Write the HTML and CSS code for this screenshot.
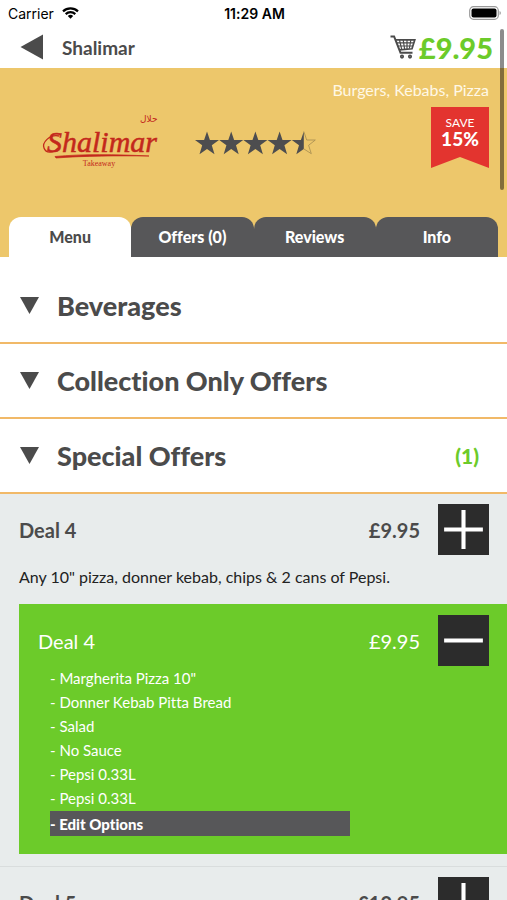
FILE: index.html
```html
<!DOCTYPE html>
<html lang="en">
<head>
<meta charset="utf-8">
<meta name="viewport" content="width=device-width, initial-scale=1">
<title>Shalimar</title>
<link rel="stylesheet" href="styles.css">
</head>
<body>
<div class="screen">
  <div class="status">
    <div class="status-left">
      <span>Carrier</span>
      <svg class="wifi" viewBox="0 0 17 12" aria-hidden="true">
        <path d="M1 4.4a11 11 0 0 1 15 0M3.7 7.1a7 7 0 0 1 9.6 0" fill="none" stroke="#000" stroke-width="2.2"/>
        <path d="M5.8 9a4 4 0 0 1 5.4 0L8.5 11.8z" fill="#000"/>
      </svg>
    </div>
    <span class="clock">11:29 AM</span>
    <div class="status-right">
      <svg class="battery" viewBox="0 0 32 14" aria-hidden="true">
        <rect x="0.7" y="0.7" width="28.6" height="12.6" rx="3.8" fill="#fff" stroke="#999" stroke-width="1.2"/>
        <rect x="2.5" y="2.5" width="25" height="9" rx="2" fill="#000"/>
        <path d="M30.6 5v4a2.3 2.3 0 0 0 0-4z" fill="#888"/>
      </svg>
    </div>
  </div>

  <header class="topbar">
    <button class="back" type="button" aria-label="Back">
      <svg viewBox="0 0 24 26" aria-hidden="true"><path d="M0.5 13 23 0.5v25z" fill="#4b4b4b"/></svg>
    </button>
    <h1>Shalimar</h1>
    <a class="basket" href="#basket">
      <svg viewBox="0 0 26 24" aria-hidden="true" fill="none" stroke="#4b4b4b">
        <path d="M0.500 1.500h3.600L10.500 17.800h12" stroke-width="2"/>
        <path d="M5.400 4.800h19.400l-2.800 9-12.600 1" stroke-width="1.700"/>
        <path d="M6.600 7.800h17.200M7.800 11h15M9.500 5l2.200 9.300M13.200 5l1.400 9M17 5v9M20.800 5l-1.400 8.500" stroke-width="1.200"/>
        <circle cx="12" cy="21.600" r="1.200" stroke-width="1.700"/>
        <circle cx="20" cy="21.600" r="1.200" stroke-width="1.700"/>
      </svg>
      <span>£9.95</span>
    </a>
  </header>

  <section class="hero">
    <div class="hero-body">
      <svg class="logo" viewBox="0 0 120 60" role="img" aria-label="Shalimar Takeaway">
        <text class="logo-name" x="7" y="42">Shalimar</text>
        <path d="M19 26c-10-2-17 7-15 12 2 6 10 5 14 0" fill="none" stroke="#c3281c" stroke-width="1.300"/>
        <path d="M15 46.500c28-2.600 60-2.200 94-0.500-32-0.300-64-0.200-93 2z" fill="#c3281c" stroke="#c3281c" stroke-width="0.700"/>
        <text class="logo-halal" x="100" y="12">حلال</text>
        <text class="logo-sub" x="59" y="56">Takeaway</text>
      </svg>
      <svg class="stars" viewBox="0 0 122 26" role="img" aria-label="4.5 out of 5 stars">
        <defs>
          <path id="star" d="M12 1.500 14.900 10H24l-7.200 5.300 2.700 8.900L12 18.900 4.500 24.200l2.700-8.900L0 10h9.100z"/>
        </defs>
        <g fill="#4d4d4f">
          <use href="#star"/><use href="#star" x="24.200"/><use href="#star" x="48.400"/><use href="#star" x="72.600"/>
          <path d="M108.800 1.500V18.900l-7.500 5.300 2.700-8.900-7.200-5.300h9.100z"/>
        </g>
        <path d="M108.800 1.500 111.700 10h8.600l-6.700 5.300 2.700 8.400-7.500-4.800" fill="none" stroke="#a38b50" stroke-width="0.800"/>
      </svg>
      <div class="hero-side">
        <p class="cuisine">Burgers, Kebabs, Pizza</p>
        <div class="ribbon"><span>SAVE</span><strong>15%</strong></div>
      </div>
    </div>
    <nav class="tabs">
      <a class="tab active" href="#menu">Menu</a>
      <a class="tab" href="#offers">Offers (0)</a>
      <a class="tab" href="#reviews">Reviews</a>
      <a class="tab" href="#info">Info</a>
    </nav>
  </section>

  <main class="menu">
    <button class="category" type="button"><i class="caret"></i><span>Beverages</span></button>
    <button class="category" type="button"><i class="caret"></i><span>Collection Only Offers</span></button>
    <button class="category" type="button"><i class="caret"></i><span>Special Offers</span><b>(1)</b></button>

    <div class="deals">
      <article class="deal">
        <div class="line">
          <h2>Deal 4</h2><span class="price">£9.95</span>
          <button class="step" type="button" aria-label="Add Deal 4"><svg viewBox="0 0 50 50"><path d="M6 25h38M25 6v38"/></svg></button>
        </div>
        <p class="about">Any 10" pizza, donner kebab, chips &amp; 2 cans of Pepsi.</p>
        <div class="chosen">
          <div class="line">
            <h3>Deal 4</h3><span class="price">£9.95</span>
            <button class="step" type="button" aria-label="Remove Deal 4"><svg viewBox="0 0 50 50"><path d="M6 25h38"/></svg></button>
          </div>
          <ul>
            <li>- Margherita Pizza 10"</li>
            <li>- Donner Kebab Pitta Bread</li>
            <li>- Salad</li>
            <li>- No Sauce</li>
            <li>- Pepsi 0.33L</li>
            <li>- Pepsi 0.33L</li>
          </ul>
          <button class="edit" type="button">- Edit Options</button>
        </div>
      </article>
      <article class="deal">
        <div class="line">
          <h2>Deal 5</h2><span class="price">£10.95</span>
          <button class="step" type="button" aria-label="Add Deal 5"><svg viewBox="0 0 50 50"><path d="M6 25h38M25 6v38"/></svg></button>
        </div>
      </article>
    </div>
  </main>
  <div class="scroll-thumb"></div>
</div>
</body>
</html>
```
FILE: styles.css
```css
* {
  box-sizing: border-box;
}

body,
h1,
h2,
h3,
p,
ul {
  margin: 0;
  padding: 0;
}

body {
  font-family: Lato, "Liberation Sans", sans-serif;
  font-variant-ligatures: none;
  color: #4b4b4b;
  background: #fff;
}

button {
  margin: 0;
  padding: 0;
  border: 0;
  font: inherit;
  font-variant-ligatures: none;
  color: inherit;
  background: none;
  text-align: left;
}

a {
  color: inherit;
  text-decoration: none;
}

svg {
  display: block;
}

.screen {
  position: relative;
  height: 100vh;
  overflow: hidden;
}

/* Status bar */
.status {
  display: grid;
  grid-template-columns: 1fr auto 1fr;
  align-items: center;
  height: 26px;
  padding: 0 6px 0 8px;
  font-family: Inter, "Liberation Sans", sans-serif;
  font-size: 14px;
  color: #000;
}

.status-left {
  display: flex;
  align-items: center;
  gap: 8px;
}

.wifi {
  width: 17px;
  height: 12px;
}

.clock {
  font-weight: 600;
}

.battery {
  width: 32px;
  height: 14px;
  margin-left: auto;
}

/* Title bar */
.topbar {
  display: flex;
  align-items: center;
  height: 42px;
  padding: 0 14px 0 20px;
}

.back svg {
  width: 24px;
  height: 26px;
}

.topbar h1 {
  flex: 1;
  margin-left: 18px;
  font-size: 19px;
  font-weight: 700;
}

.basket {
  display: flex;
  align-items: center;
  gap: 3px;
  font-size: 29px;
  font-weight: 900;
  color: #6ccb2a;
}

.basket svg {
  width: 26px;
  height: 24px;
}

/* Restaurant banner */
.hero {
  background: #edc76b;
}

.hero-body {
  display: flex;
  height: 149px;
  padding: 0 18px 0 40px;
}

.logo {
  width: 120px;
  height: 60px;
  margin-top: 42px;
  overflow: visible;
}

.logo text {
  fill: #c3281c;
}

.logo-name {
  font-family: "Liberation Serif", serif;
  font-style: italic;
  font-size: 30px;
  stroke: #c3281c;
  stroke-width: 0.5px;
}

.logo-halal {
  font-family: "DejaVu Sans", sans-serif;
  font-size: 9px;
}

.logo-sub {
  font-family: "Liberation Serif", serif;
  font-size: 8px;
  text-anchor: middle;
}

.stars {
  width: 122px;
  height: 26px;
  margin: 62px 0 0 35px;
}

.hero-side {
  flex: 1;
  display: flex;
  flex-direction: column;
  align-items: flex-end;
  padding-top: 12px;
}

.cuisine {
  font-size: 16px;
  line-height: 20px;
  color: #fff8e6;
  white-space: nowrap;
}

.ribbon {
  display: flex;
  flex-direction: column;
  align-items: center;
  width: 58px;
  height: 61px;
  margin-top: 7px;
  padding-top: 8px;
  color: #fff;
  background: #e3342f;
  clip-path: polygon(0 0, 100% 0, 100% 100%, 50% 82%, 0 100%);
}

.ribbon span {
  font-size: 12px;
  line-height: 15px;
}

.ribbon strong {
  font-size: 19px;
  line-height: 17px;
  font-weight: 900;
}

.tabs {
  display: flex;
  padding: 0 9px;
}

.tab {
  flex: 1;
  height: 40px;
  border-radius: 12px 12px 0 0;
  font-size: 16px;
  font-weight: 900;
  line-height: 40px;
  text-align: center;
  color: #fff;
  background: #575759;
}

.tab.active {
  color: #4b4b4b;
  background: #fff;
}

/* Menu categories */
.menu {
  padding-top: 12px;
}

.category {
  display: flex;
  align-items: center;
  width: 100%;
  height: 75px;
  padding: 0 28px 0 20px;
  border-bottom: 2px solid #f1b968;
  font-size: 27px;
  font-weight: 900;
}

.caret {
  width: 19px;
  height: 17px;
  margin-right: 18px;
  background: #4b4b4b;
  clip-path: polygon(0 0, 100% 0, 50% 100%);
}

.category span {
  flex: 1;
}

.category b {
  font-size: 21px;
  font-weight: 900;
  color: #6ccb2a;
}

/* Deals */
.deals {
  background: #e8ecec;
}

.deal {
  padding: 10px 0 12px 19px;
  border-bottom: 1px solid #d9dddd;
}

.line {
  display: flex;
  align-items: center;
  padding-right: 18px;
}

.line h2,
.line h3 {
  flex: 1;
  font-size: 20px;
}

.line h3 {
  font-weight: 400;
}

.price {
  margin-right: 18px;
  font-size: 20px;
}

.deal > .line .price,
.deal > .line h2 {
  font-weight: 700;
}

.step {
  width: 51px;
  height: 51px;
  background: #2c2c2c;
}

.step path {
  stroke: #fff;
  stroke-width: 4;
}

.about {
  padding: 11px 0 16px;
  font-size: 16px;
  line-height: 22px;
  color: #222;
}

.chosen {
  padding: 11px 0 18px 19px;
  color: #fff;
  background: #6ccb2a;
}

.chosen ul {
  margin-left: 12px;
  list-style: none;
}

.chosen li {
  font-size: 15px;
  line-height: 24px;
}

.edit {
  display: block;
  width: 64%;
  height: 25px;
  margin: 1px 0 0 12px;
  font-size: 15px;
  font-weight: 900;
  background: #575759;
}

/* Scroll position indicator, drawn over the page */
.scroll-thumb {
  position: absolute;
  top: 29px;
  right: 3px;
  width: 4px;
  height: 161px;
  border-radius: 2px;
  background: rgba(0, 0, 0, 0.45);
}
```
